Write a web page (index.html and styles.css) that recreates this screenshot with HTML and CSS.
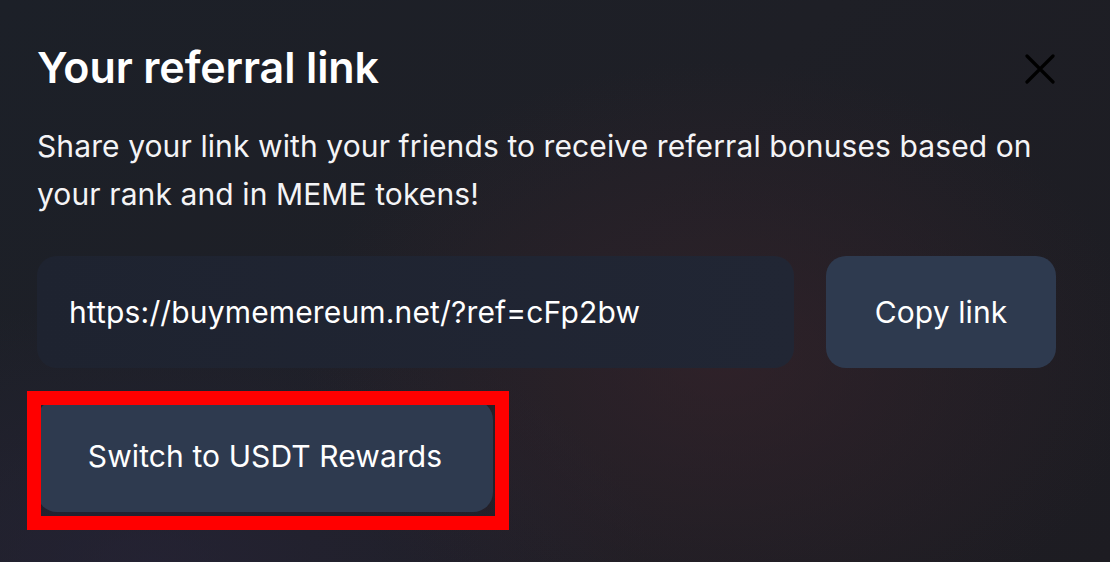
FILE: index.html
```html
<!DOCTYPE html>
<html>
<head>
    <title>Your referral link</title>
    <link rel="stylesheet" href="styles.css">
</head>
<body>
    <div class="modal">
        <div class="modal_head">
            <h2>Your referral link</h2>
            <button class="close_btn" aria-label="Close">
                <svg width="30" height="30" viewBox="0 0 30 30">
                    <path d="M2 2 L28 28 M28 2 L2 28" stroke="#000" stroke-width="3.2" stroke-linecap="round" fill="none"/>
                </svg>
            </button>
        </div>
        <p class="desc">Share your link with your friends to receive referral bonuses based on your rank and in MEME tokens!</p>
        <div class="link_row">
            <div class="link_field">https://buymemereum.net/?ref=cFp2bw</div>
            <button class="btn copy_btn">Copy link</button>
        </div>
        <div class="switch_wrap">
            <button class="btn switch_btn">Switch to USDT Rewards</button>
            <span class="mark"></span>
        </div>
    </div>
</body>
</html>
```

FILE: styles.css
```css
* {
    margin: 0;
    padding: 0;
    box-sizing: border-box;
}
html, body {
    height: 100%;
}
body {
    font-family: Inter, "Noto Sans", sans-serif;
    color: #fff;
    background-color: #1d1f26;
    background-image:
        radial-gradient(ellipse 420px 300px at 720px 360px, rgba(60, 36, 44, 0.55), rgba(60, 36, 44, 0)),
        radial-gradient(ellipse 500px 260px at 150px 560px, rgba(40, 36, 58, 0.6), rgba(40, 36, 58, 0)),
        linear-gradient(135deg, #1c2028 0%, #1e1f26 50%, #1d1c22 100%);
    overflow: hidden;
}
.modal {
    padding: 42px 54px 0 37px;
}
.modal_head {
    display: flex;
    justify-content: space-between;
    align-items: flex-start;
}
.modal_head h2 {
    font-size: 43px;
    line-height: 50px;
    font-weight: 600;
    letter-spacing: -0.1px;
}
.close_btn {
    background: none;
    border: none;
    width: 30px;
    height: 30px;
    margin-top: 12px;
    margin-right: 1px;
    cursor: pointer;
}
.close_btn svg {
    display: block;
}
.desc {
    margin-top: 30px;
    font-size: 30px;
    line-height: 48px;
    color: #f4f4f6;
    letter-spacing: 0.1px;
}
.link_row {
    margin-top: 38px;
    display: flex;
    gap: 32px;
}
.link_field {
    flex: 1;
    height: 112px;
    border-radius: 20px;
    background: linear-gradient(90deg, #1e2330, #212634);
    padding-left: 32px;
    display: flex;
    align-items: center;
    font-size: 30px;
    letter-spacing: 0.15px;
}
.btn {
    height: 112px;
    border: none;
    border-radius: 20px;
    background-color: #2e3a4f;
    color: #fff;
    font-family: inherit;
    font-size: 30px;
    letter-spacing: 0.1px;
    cursor: pointer;
}
.copy_btn {
    width: 230px;
}
.switch_wrap {
    position: relative;
    margin-top: 32px;
    width: 456px;
}
.switch_btn {
    width: 456px;
    display: block;
}
.mark {
    position: absolute;
    left: -10px;
    top: -9px;
    width: 482px;
    height: 139px;
    border: 14px solid #ff0000;
    pointer-events: none;
}
```
